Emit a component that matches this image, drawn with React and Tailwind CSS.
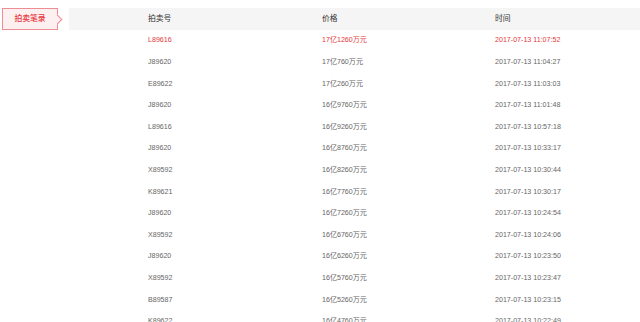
import React from "react"

const rows = [
  ["L89616", "17亿1260万元", "2017-07-13 11:07:52"],
  ["J89620", "17亿760万元", "2017-07-13 11:04:27"],
  ["E89622", "17亿260万元", "2017-07-13 11:03:03"],
  ["J89620", "16亿9760万元", "2017-07-13 11:01:48"],
  ["L89616", "16亿9260万元", "2017-07-13 10:57:18"],
  ["J89620", "16亿8760万元", "2017-07-13 10:33:17"],
  ["X89592", "16亿8260万元", "2017-07-13 10:30:44"],
  ["K89621", "16亿7760万元", "2017-07-13 10:30:17"],
  ["J89620", "16亿7260万元", "2017-07-13 10:24:54"],
  ["X89592", "16亿6760万元", "2017-07-13 10:24:06"],
  ["J89620", "16亿6260万元", "2017-07-13 10:23:50"],
  ["X89592", "16亿5760万元", "2017-07-13 10:23:47"],
  ["B89587", "16亿5260万元", "2017-07-13 10:23:15"],
  ["K89622", "16亿4760万元", "2017-07-13 10:22:49"],
]

const App = () => {
  return (
    <div
      className="w-[640px] h-[322px] overflow-hidden bg-white flex pt-[8px]"
      style={{ fontFamily: '"Liberation Sans", "Noto Sans CJK SC", sans-serif' }}
    >
      {/* side tab */}
      <div className="w-[69px] shrink-0 pl-[2px]">
        <div className="relative w-[56px] h-[22px] bg-[#fdf0f1] border border-[#ef8d94] flex items-center justify-center text-[7.8px] font-medium text-[#e8383d]">
          拍卖笔录
          <span className="absolute right-[-4px] top-[7px] w-[7px] h-[7px] bg-[#fdf0f1] border-t border-r border-[#ef8d94] rotate-45" />
        </div>
      </div>

      {/* record table */}
      <div className="flex-1">
        <div className="h-[22px] bg-[#f5f5f5] grid grid-cols-[174px_173px_1fr] pl-[79px] items-center text-[7.8px] text-[#333]">
          <span>拍卖号</span>
          <span>价格</span>
          <span>时间</span>
        </div>
        {rows.map((r, i) => (
          <div
            key={i}
            className={`h-[21.6px] grid grid-cols-[174px_173px_1fr] pl-[79px] items-center text-[7.1px] ${
              i === 0 ? "text-[#e4393c]" : "text-[#666]"
            }`}
          >
            <span>{r[0]}</span>
            <span>{r[1]}</span>
            <span>{r[2]}</span>
          </div>
        ))}
      </div>
    </div>
  )
}

export default App
